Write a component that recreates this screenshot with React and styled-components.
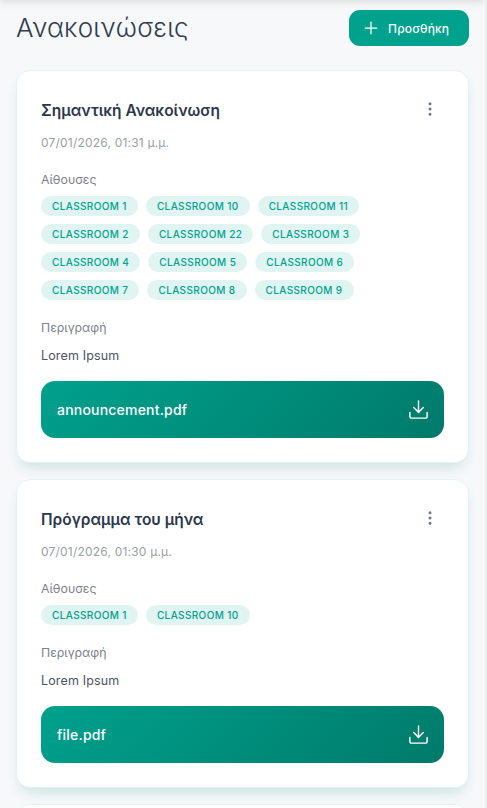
import React from "react";
import styled, { createGlobalStyle } from "styled-components";
import { Plus, EllipsisVertical, Download } from "lucide-react";

const GlobalStyle = createGlobalStyle`
  html, body {
    margin: 0;
    padding: 0;
    background: #f6f8fa;
    font-family: "Inter", "Noto Sans", sans-serif;
    overflow: hidden;
  }
  * { box-sizing: border-box; }
`;

const Page = styled.main`
  position: relative;
  height: 808px;
  overflow: hidden;
  padding: 10px 16px 0 16px;
  border-right: 2px solid #eceef1;
  &::before {
    content: "";
    position: absolute;
    top: -10px;
    left: 0;
    right: 0;
    height: 10px;
    box-shadow: 0 2px 8px rgba(0, 0, 0, 0.12);
  }
`;

const Header = styled.header`
  display: flex;
  align-items: center;
  justify-content: space-between;
  margin-bottom: 24px;
`;

const Title = styled.h1`
  margin: 0;
  font-size: 26px;
  font-weight: 300;
  letter-spacing: 0.2px;
  color: #2f3b4e;
  line-height: 36px;
`;

const AddButton = styled.button`
  display: flex;
  align-items: center;
  gap: 7px;
  width: 120px;
  height: 36px;
  padding: 0 0 0 12px;
  border: 0;
  border-radius: 11px;
  background: #00a18d;
  color: #fff;
  font: 500 12px "Inter", sans-serif;
  letter-spacing: 0.2px;
`;

const Card = styled.article`
  background: #fff;
  border: 1px solid #e2f5f3;
  border-radius: 14px;
  padding: 24px;
  margin-bottom: 16.2px;
  box-shadow: 0 8px 14px -5px rgba(0, 121, 107, 0.2);
`;

const CardTop = styled.div`
  display: flex;
  justify-content: space-between;
  align-items: flex-start;
`;

const CardTitle = styled.h2`
  margin: 0;
  font-size: 15.5px;
  font-weight: 600;
  line-height: 32px;
  color: #2b384b;
`;

const MoreButton = styled.span`
  display: flex;
  color: #6f7781;
  margin: 5px 5px 0 0;
`;

const DateText = styled.div`
  margin-top: 6px;
  font-size: 12px;
  letter-spacing: 0.2px;
  line-height: 20px;
  color: #9a9fa6;
`;

const Label = styled.div`
  margin-top: ${(p) => p.$top}px;
  font-size: 12.3px;
  line-height: 20px;
  color: #7c828a;
`;

const Chips = styled.div`
  display: flex;
  flex-wrap: wrap;
  gap: 8px;
  margin-top: 6px;
`;

const Chip = styled.span`
  height: 20px;
  padding: 0 11px;
  border-radius: 10px;
  background: #e0f4f2;
  color: #00a18d;
  font-size: 10px;
  font-weight: 500;
  line-height: 21px;
  letter-spacing: 0.38px;
`;

const Body = styled.p`
  margin: 8px 0 0;
  font-size: 12.5px;
  letter-spacing: 0.15px;
  line-height: 20px;
  color: #4a5464;
`;

const FileBar = styled.div`
  display: flex;
  align-items: center;
  justify-content: space-between;
  height: 57px;
  margin-top: 15px;
  padding: 0 14px 0 16px;
  border-radius: 14px;
  background: linear-gradient(135deg, #00a18d 0%, #007a6a 100%);
  color: #fff;
  font-size: 14px;
  font-weight: 500;
  letter-spacing: 0.2px;
`;

const rooms = ["1", "10", "11", "2", "22", "3", "4", "5", "6", "7", "8", "9"];

const items = [
  {
    title: "Σημαντική Ανακοίνωση",
    date: "07/01/2026, 01:31 μ.μ.",
    rooms,
    file: "announcement.pdf",
  },
  {
    title: "Πρόγραμμα του μήνα",
    date: "07/01/2026, 01:30 μ.μ.",
    rooms: ["1", "10"],
    file: "file.pdf",
  },
];

const App = () => (
  <>
    <GlobalStyle />
    <Page>
      <Header>
        <Title>Ανακοινώσεις</Title>
        <AddButton>
          <Plus size={20} strokeWidth={1.5} />
          Προσθήκη
        </AddButton>
      </Header>
      {items.map((item) => (
        <Card key={item.title}>
          <CardTop>
            <CardTitle>{item.title}</CardTitle>
            <MoreButton>
              <EllipsisVertical size={18} />
            </MoreButton>
          </CardTop>
          <DateText>{item.date}</DateText>
          <Label $top={17}>Αίθουσες</Label>
          <Chips>
            {item.rooms.map((room) => (
              <Chip key={room}>CLASSROOM {room}</Chip>
            ))}
          </Chips>
          <Label $top={18}>Περιγραφή</Label>
          <Body>Lorem Ipsum</Body>
          <FileBar>
            {item.file}
            <Download size={23} strokeWidth={1.5} />
          </FileBar>
        </Card>
      ))}
      <Card />
    </Page>
  </>
);

export default App;
